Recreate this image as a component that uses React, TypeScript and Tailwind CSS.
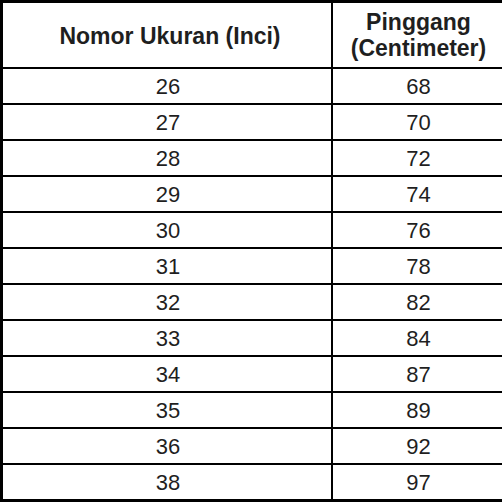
const rows: [string, string][] = [
  ['26', '68'],
  ['27', '70'],
  ['28', '72'],
  ['29', '74'],
  ['30', '76'],
  ['31', '78'],
  ['32', '82'],
  ['33', '84'],
  ['34', '87'],
  ['35', '89'],
  ['36', '92'],
  ['38', '97'],
];

export default function App() {
  return (
    <div
      className="w-[502px] h-[502px] bg-white border-t-[3px] border-l-[3px] border-b-[3px] border-black text-[#1f1f1f]"
      style={{ fontFamily: '"Liberation Sans", Arial, sans-serif' }}
    >
      <div className="flex h-[64px] font-bold text-[23px] leading-[26px]">
        <div className="w-[328px] flex items-center justify-center pl-[6px] pt-[2px]">Nomor Ukuran (Inci)</div>
        <div className="flex-1 border-l-2 border-black flex flex-col items-center justify-center pl-[2px]">
          <span>Pinggang</span>
          <span>(Centimeter)</span>
        </div>
      </div>
      {rows.map(([size, waist]) => (
        <div key={size} className="flex h-[36px] border-t-2 border-black text-[22px]">
          <div className="w-[328px] flex items-center justify-center pl-[2px]">{size}</div>
          <div className="flex-1 border-l-2 border-black flex items-center justify-center pl-[2px]">{waist}</div>
        </div>
      ))}
    </div>
  );
}
